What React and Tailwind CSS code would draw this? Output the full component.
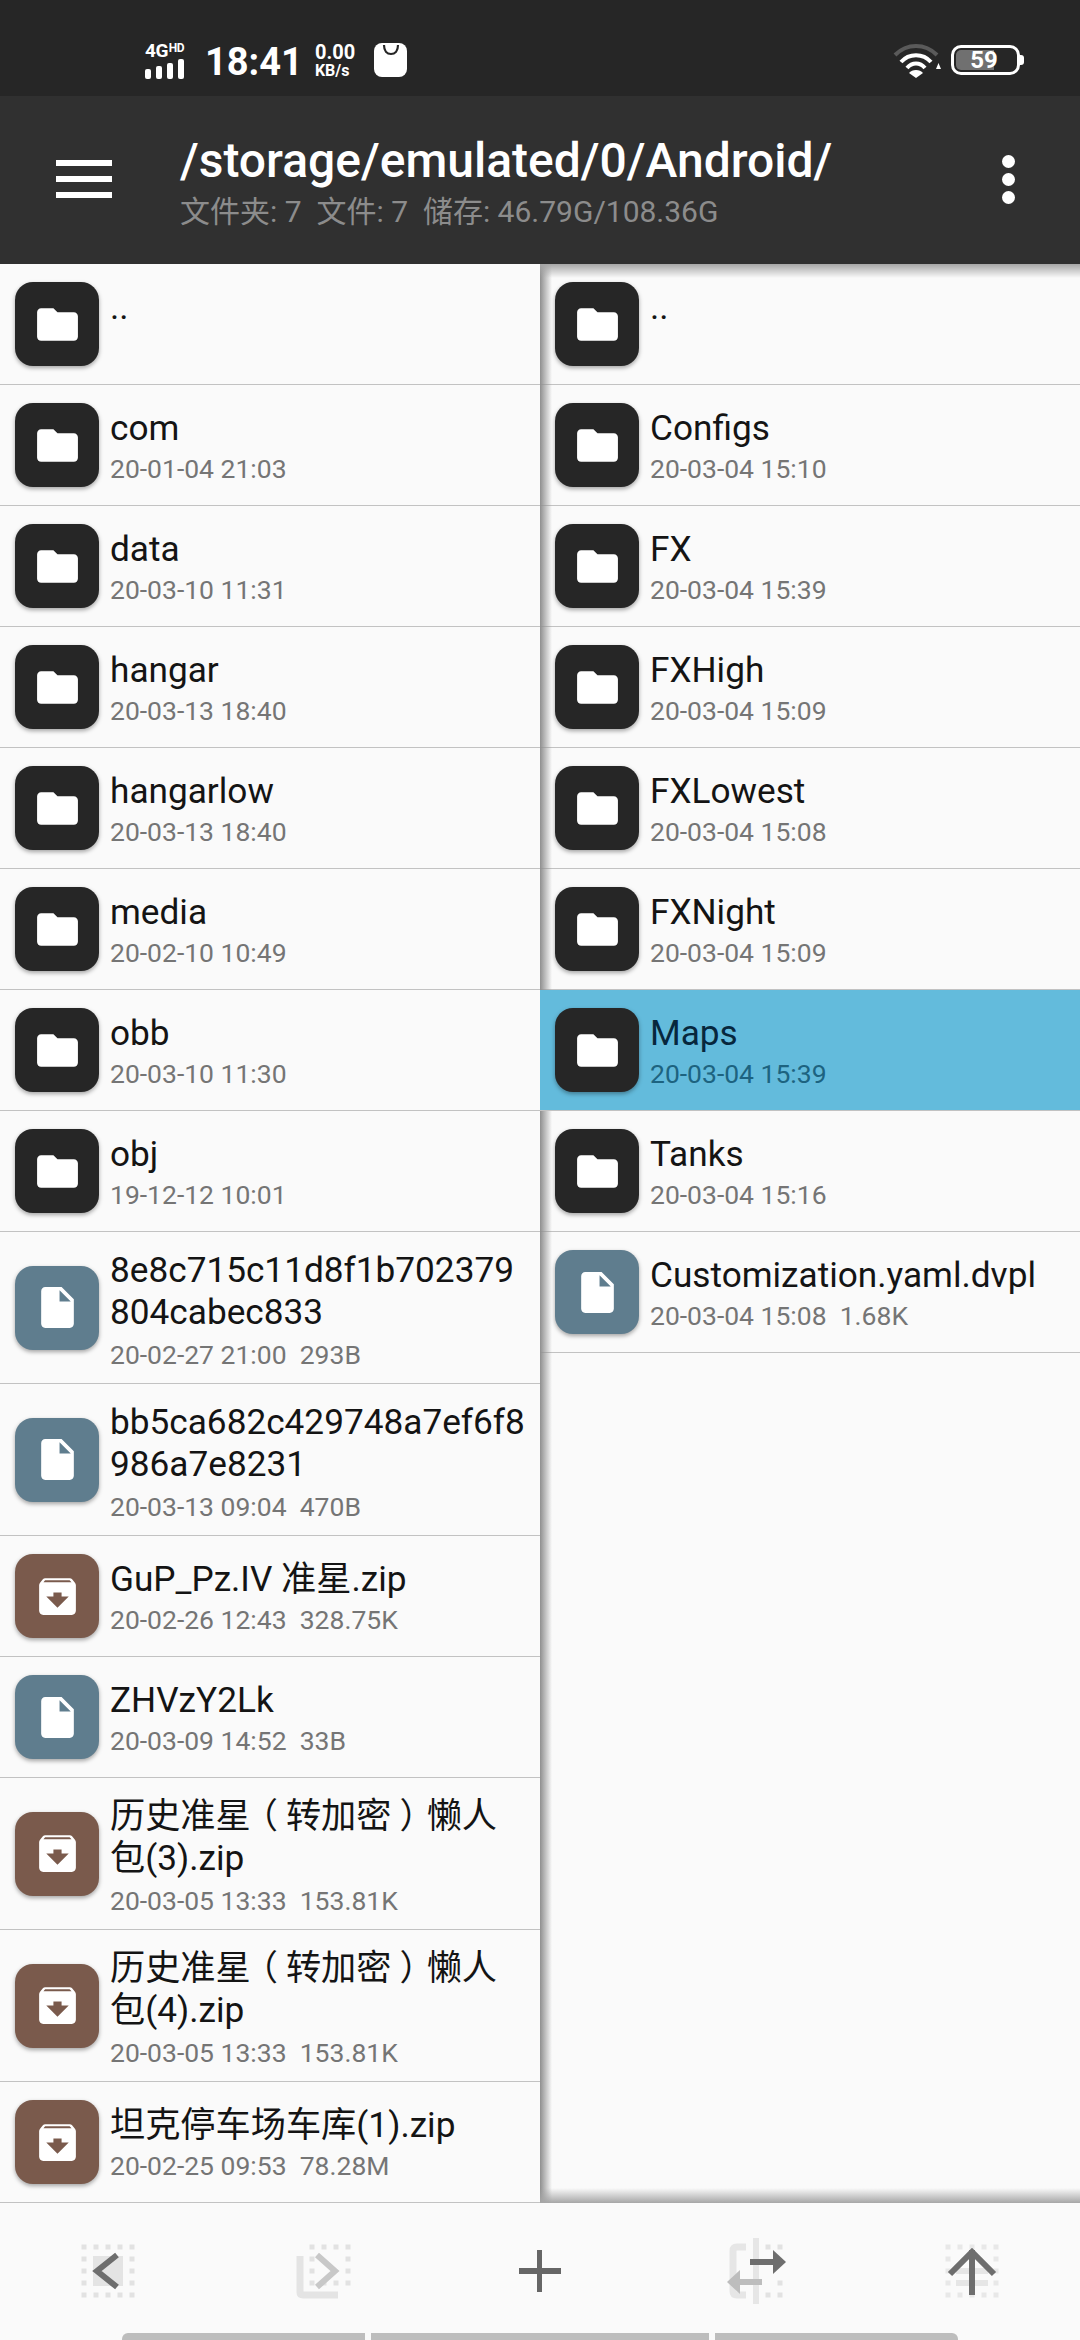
const FOLDER = "M10 4H4c-1.1 0-1.99.9-1.99 2L2 18c0 1.1.9 2 2 2h16c1.1 0 2-.9 2-2V8c0-1.1-.9-2-2-2h-8l-2-2z";
const FILE = "M6 2c-1.1 0-1.99.9-1.99 2L4 20c0 1.1.89 2 1.99 2H18c1.1 0 2-.9 2-2V8l-6-6H6zm7 7V3.5L18.5 9H13z";
const ZIP = "M20.54 5.23l-1.39-1.68C18.88 3.21 18.47 3 18 3H6c-.47 0-.88.21-1.16.55L3.46 5.23C3.17 5.57 3 6.02 3 6.5V19c0 1.1.9 2 2 2h14c1.1 0 2-.9 2-2V6.5c0-.48-.17-.93-.46-1.27zM12 17.5L6.5 12H10v-2h4v2h3.5L12 17.5zM5.12 5l.81-1h12l.94 1H5.12z";

// the reference font centres fullwidth brackets in their cell, the SC cut doesn't
const lazyName = (n) => (
  <>
    历史准星<span className="inline-block -translate-x-[8px]">（</span>转加密<span className="inline-block translate-x-[8px]">）</span>懒人{"\n"}包({n}).zip
  </>
);

const leftFiles = [
  { type: "folder", name: ".." },
  { type: "folder", name: "com", info: "20-01-04 21:03" },
  { type: "folder", name: "data", info: "20-03-10 11:31" },
  { type: "folder", name: "hangar", info: "20-03-13 18:40" },
  { type: "folder", name: "hangarlow", info: "20-03-13 18:40" },
  { type: "folder", name: "media", info: "20-02-10 10:49" },
  { type: "folder", name: "obb", info: "20-03-10 11:30" },
  { type: "folder", name: "obj", info: "19-12-12 10:01" },
  { type: "file", name: "8e8c715c11d8f1b702379\n804cabec833", info: "20-02-27 21:00  293B", tall: true },
  { type: "file", name: "bb5ca682c429748a7ef6f8\n986a7e8231", info: "20-03-13 09:04  470B", tall: true },
  { type: "zip", name: "GuP_Pz.IV 准星.zip", info: "20-02-26 12:43  328.75K" },
  { type: "file", name: "ZHVzY2Lk", info: "20-03-09 14:52  33B" },
  { type: "zip", name: lazyName(3), info: "20-03-05 13:33  153.81K", tall: true },
  { type: "zip", name: lazyName(4), info: "20-03-05 13:33  153.81K", tall: true },
  { type: "zip", name: "坦克停车场车库(1).zip", info: "20-02-25 09:53  78.28M" },
];

const rightFiles = [
  { type: "folder", name: ".." },
  { type: "folder", name: "Configs", info: "20-03-04 15:10" },
  { type: "folder", name: "FX", info: "20-03-04 15:39" },
  { type: "folder", name: "FXHigh", info: "20-03-04 15:09" },
  { type: "folder", name: "FXLowest", info: "20-03-04 15:08" },
  { type: "folder", name: "FXNight", info: "20-03-04 15:09" },
  { type: "folder", name: "Maps", info: "20-03-04 15:39", selected: true },
  { type: "folder", name: "Tanks", info: "20-03-04 15:16" },
  { type: "file", name: "Customization.yaml.dvpl", info: "20-03-04 15:08  1.68K" },
];

const Tile = ({ type }) => {
  const bg = type === "folder" ? "bg-[#262626]" : type === "file" ? "bg-[#5f7d8e]" : "bg-[#7a5a4c]";
  const path = type === "folder" ? FOLDER : type === "file" ? FILE : ZIP;
  return (
    <div className={`w-[84px] h-[84px] rounded-[18px] flex items-center justify-center shrink-0 shadow-[0_2px_4px_rgba(0,0,0,0.35)] ${bg}`}>
      <svg width="49" height="49" viewBox="0 0 24 24" fill="#ffffff" fillRule="evenodd">
        <path d={path} />
      </svg>
    </div>
  );
};

const Row = ({ item }) => (
  <div
    className={`flex items-center gap-[11px] pl-[15px] border-b border-[#c2c2c2] ${item.tall ? "h-[152px]" : "h-[121px]"} ${
      item.selected ? "relative z-10 bg-[#63bbdc]" : ""
    }`}
  >
    <Tile type={item.type} />
    <div className={`flex-1 self-start min-w-0 ${item.tall ? "pt-[17px]" : "pt-[22px]"}`}>
      <div className={`text-[35.2px] leading-[42px] whitespace-pre-line ${item.selected ? "text-[#07273d]" : "text-[#141414]"}`}>
        {item.name}
      </div>
      {item.info && (
        <div className={`text-[26.5px] leading-[36px] whitespace-pre ${item.tall ? "mt-[4px]" : "mt-[2px]"} ${item.selected ? "text-[#1d6380]" : "text-[#757575]"}`}>
          {item.info}
        </div>
      )}
    </div>
  </div>
);

const StatusBar = () => (
  <div className="h-[96px] bg-[#262626] flex items-center pt-[24px] pl-[145px] pr-[60px] text-white">
    <div className="w-[46px] flex flex-col">
      <div className="flex items-start font-bold leading-none h-[17px] text-[19px] tracking-[-0.5px]">
        4G<span className="text-[12px] mt-[1px] ml-[1px]">HD</span>
      </div>
      <div className="flex items-end gap-[5px] h-[20px] mt-[1px]">
        <div className="w-[6px] h-[10px] bg-white rounded-[2px]" />
        <div className="w-[6px] h-[13px] bg-white rounded-[2px]" />
        <div className="w-[6px] h-[16px] bg-white rounded-[2px]" />
        <div className="w-[6px] h-[20px] bg-white rounded-[2px]" />
      </div>
    </div>
    <div className="ml-[14px] text-[38px] font-bold leading-none mt-[3px]">18:41</div>
    <div className="ml-[12px] flex flex-col font-bold">
      <span className="text-[20px] leading-[20px]">0.00</span>
      <span className="text-[16px] leading-[16px] mt-[1px]">KB/s</span>
    </div>
    <div className="ml-[19px] w-[33px] h-[34px] bg-white rounded-[8px] flex justify-center">
      <svg width="20" height="14" viewBox="0 0 20 14" fill="none" stroke="#262626" strokeWidth="2.2">
        <path d="M3 2c0 6 3 9 7 9s7-3 7-9" />
      </svg>
    </div>
    <div className="flex-1" />
    <svg width="50" height="36" viewBox="0 0 50 36" className="mr-[9px]">
      <path d="M3 13C15 1 33 1 45 13" fill="none" stroke="#5a5a5a" strokeWidth="4" />
      <path d="M9 20C17 11 31 11 39 20" fill="none" stroke="#ffffff" strokeWidth="4" />
      <path d="M15 26C20 20 28 20 33 26" fill="none" stroke="#ffffff" strokeWidth="4" />
      <path d="M17 31C20 27 28 27 31 31L24 36Z" fill="#ffffff" />
      <path d="M44 27L49 27L46.5 21Z" fill="#ffffff" />
    </svg>
    <div className="relative w-[69px] h-[30px] border-[3px] border-white rounded-[10px] flex items-center p-[2px]">
      <div className="w-[38px] h-full bg-[#707070] rounded-l-[5px]" />
      <span className="absolute inset-0 flex items-center justify-center pr-[3px] text-[24px] font-bold leading-none">59</span>
      <div className="absolute right-[-7px] top-[7px] w-[4px] h-[10px] bg-white rounded-r-[3px]" />
    </div>
  </div>
);

const Header = () => (
  <div className="h-[168px] bg-[#303030] flex items-start relative">
    <div className="w-[56px] ml-[56px] mt-[64px] flex flex-col gap-[10px]">
      <div className="h-[6px] bg-white" />
      <div className="h-[6px] bg-white" />
      <div className="h-[6px] bg-white" />
    </div>
    <div className="ml-[68px] pt-[39px]">
      <div className="text-white text-[48px] leading-[52px] font-medium">/storage/emulated/0/Android/</div>
      <div className="text-[#8c8c8c] text-[30px] leading-[36px] mt-[7px] whitespace-pre">文件夹: 7  文件: 7  储存: 46.79G/108.36G</div>
    </div>
    <div className="absolute right-[65px] top-[59px] flex flex-col gap-[5px]">
      <div className="w-[13px] h-[13px] rounded-full bg-white" />
      <div className="w-[13px] h-[13px] rounded-full bg-white" />
      <div className="w-[13px] h-[13px] rounded-full bg-white" />
    </div>
  </div>
);

const Dots = ({ points, fill = "#e2e2e2" }) => (
  <g fill={fill}>
    {points.map(([x, y]) => (
      <rect key={`${x}-${y}`} x={x - 2.5} y={y - 2.5} width="5" height="5" />
    ))}
  </g>
);

const ring = [
  [12, 12], [24, 12], [36, 12], [48, 12], [60, 12],
  [12, 24], [60, 24], [12, 36], [60, 36], [12, 48], [60, 48],
  [12, 60], [24, 60], [36, 60], [48, 60], [60, 60],
];

const BackIcon = () => (
  <svg width="72" height="72" viewBox="0 0 72 72" fill="none">
    <Dots points={ring} />
    <rect x="21" y="21" width="30" height="30" fill="#e4e4e4" />
    <path d="M45 20L25 36L45 52" stroke="#6e6e6e" strokeWidth="6" />
  </svg>
);

const ForwardIcon = () => (
  <svg width="72" height="72" viewBox="0 0 72 72" fill="none">
    <Dots
      points={[
        [24, 12], [36, 12], [48, 12], [60, 12], [24, 24], [60, 24], [24, 36], [60, 36],
        [24, 48], [36, 48], [48, 48], [60, 48],
      ]}
    />
    <path d="M12 21V57Q12 60 15 60H50" stroke="#e4e4e4" strokeWidth="7" />
    <path d="M29 20L47 36L29 52" stroke="#c8c8c8" strokeWidth="6" />
  </svg>
);

const SwapIcon = () => (
  <svg width="72" height="72" viewBox="0 0 72 72" fill="none">
    <Dots points={[[48, 12], [60, 12], [48, 60], [60, 60], [60, 48]]} />
    <path d="M26 12H17Q13 12 13 16V56Q13 60 17 60H26" stroke="#e6e6e6" strokeWidth="7" />
    <rect x="33" y="3" width="6" height="66" fill="#e6e6e6" />
    <rect x="20" y="44" width="22" height="6" fill="#bdbdbd" />
    <path d="M7 47L20 35V59Z" fill="#bdbdbd" />
    <rect x="30" y="24" width="25" height="6" fill="#6e6e6e" />
    <path d="M66 27L53 15V39Z" fill="#6e6e6e" />
  </svg>
);

const UpIcon = () => (
  <svg width="72" height="72" viewBox="0 0 72 72" fill="none">
    <Dots points={ring} fill="#e8e8e8" />
    <rect x="20" y="33" width="32" height="6" fill="#e6e6e6" />
    <rect x="20" y="45" width="32" height="6" fill="#e6e6e6" />
    <path d="M36 15V60" stroke="#6e6e6e" strokeWidth="6" />
    <path d="M14 39L36 17L58 39" stroke="#6e6e6e" strokeWidth="6" />
  </svg>
);

const BottomBar = () => (
  <div className="h-[137px] bg-[#fafafa] flex flex-col">
    <div className="h-[130px] pt-[6px] grid grid-cols-5 items-center justify-items-center">
      <BackIcon />
      <ForwardIcon />
      <div className="relative w-[42px] h-[42px] flex items-center justify-center">
        <div className="w-[42px] h-[6px] bg-[#666666]" />
        <div className="absolute left-[18px] top-0 w-[5px] h-[42px] bg-[#666666]" />
      </div>
      <SwapIcon />
      <UpIcon />
    </div>
    <div className="h-[7px] flex justify-center gap-[6px]">
      <div className="w-[243px] bg-[#bdbdbd] rounded-tl-[6px]" />
      <div className="w-[338px] bg-[#bdbdbd]" />
      <div className="w-[243px] bg-[#bdbdbd] rounded-tr-[6px]" />
    </div>
  </div>
);

export default function App() {
  return (
    <div className="w-[1080px] h-[2340px] overflow-hidden flex flex-col bg-[#fafafa] font-['Roboto','Noto_Sans_CJK_SC',sans-serif]">
      <StatusBar />
      <Header />
      <div className="h-[1939px] flex">
        <div className="w-[540px] h-full bg-[#fafafa]">
          {leftFiles.map((item, i) => (
            <Row key={i} item={item} />
          ))}
        </div>
        <div className="relative flex-1 h-full bg-[#fafafa] overflow-hidden">
          {rightFiles.map((item, i) => (
            <Row key={i} item={item} />
          ))}
          {/* shadows cast by the left pane, header and bottom bar */}
          <div className="absolute left-0 top-0 bottom-0 w-[12px] bg-gradient-to-r from-[#8f8f8f] to-transparent" />
          <div className="absolute left-0 right-0 top-0 h-[14px] bg-gradient-to-b from-[#a6a6a6] to-transparent" />
          <div className="absolute left-0 right-0 bottom-0 h-[15px] bg-gradient-to-t from-[#a6a6a6] to-transparent" />
        </div>
      </div>
      <BottomBar />
    </div>
  );
}
